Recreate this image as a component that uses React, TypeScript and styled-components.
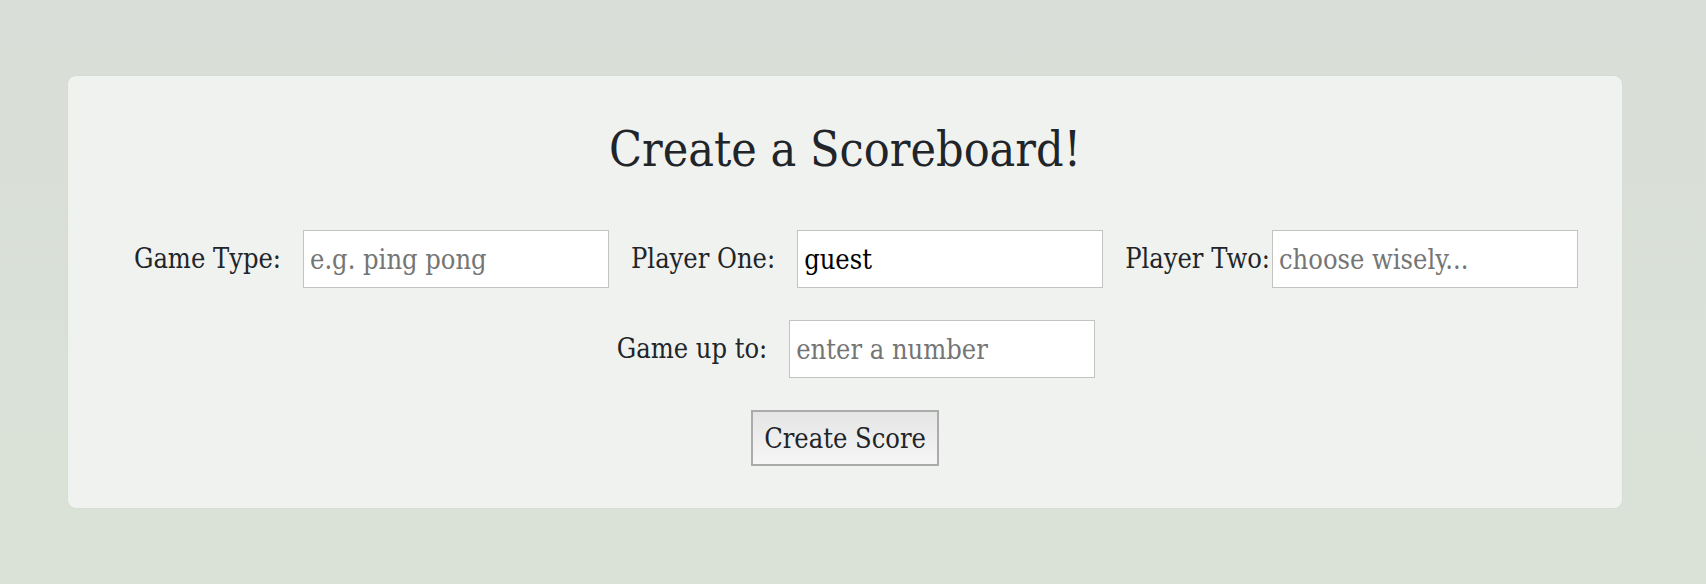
import styled, { createGlobalStyle } from 'styled-components';

const GlobalStyle = createGlobalStyle`
    body {
        margin: 0;
        background: linear-gradient(180deg, #d9ded8 0%, #dae2d7 100%);
        min-height: 584px;
        font-family: "DejaVu Serif Condensed", "DejaVu Serif", serif;
        color: #212529;
    }
`;

const Page = styled.div`
    padding: 76px 0 0 68px;
`;

const Card = styled.form`
    box-sizing: border-box;
    width: 1554px;
    height: 432px;
    background: #f0f2ef;
    border-radius: 8px;
    box-shadow: 0 0 2px rgba(0, 0, 0, 0.06);
    display: flex;
    flex-direction: column;
    align-items: center;
    padding-top: 41px;
`;

const Title = styled.h1`
    margin: 0 0 49px 0;
    font-size: 48px;
    font-weight: 400;
    line-height: 64px;
`;

const Row = styled.div`
    display: flex;
    align-items: center;
    justify-content: center;
    padding-left: 22px;
    margin-bottom: 32px;
`;

const Label = styled.label<{ $tight?: boolean }>`
    font-size: 27px;
    line-height: 58px;
    margin-right: ${p => p.$tight ? '2px' : '22px'};
    white-space: nowrap;
`;

const Field = styled.input`
    box-sizing: border-box;
    width: 306px;
    height: 58px;
    border: 1px solid #c3c3c3;
    background: #fff;
    padding: 0 6px;
    margin-right: 22px;
    font-family: inherit;
    font-size: 27px;
    color: #000;
    outline: none;

    &::placeholder {
        color: #757575;
    }

    &:last-child {
        margin-right: 0;
    }
`;

const SubmitButton = styled.button`
    box-sizing: border-box;
    width: 188px;
    height: 56px;
    border: 2px solid #ababab;
    background: linear-gradient(180deg, #e5e5e5 0%, #f6f6f6 100%);
    font-family: inherit;
    font-size: 27px;
    color: #212529;
    padding: 0;
`;

export default function App() {
    return (
        <>
            <GlobalStyle />
            <Page>
                <Card onSubmit={e => e.preventDefault()}>
                    <Title>Create a Scoreboard!</Title>
                    <Row>
                        <Label>Game Type:</Label>
                        <Field placeholder="e.g. ping pong" />
                        <Label>Player One:</Label>
                        <Field defaultValue="guest" />
                        <Label $tight>Player Two:</Label>
                        <Field placeholder="choose wisely..." />
                    </Row>
                    <Row>
                        <Label>Game up to:</Label>
                        <Field placeholder="enter a number" />
                    </Row>
                    <SubmitButton type="submit">Create Score</SubmitButton>
                </Card>
            </Page>
        </>
    );
}
